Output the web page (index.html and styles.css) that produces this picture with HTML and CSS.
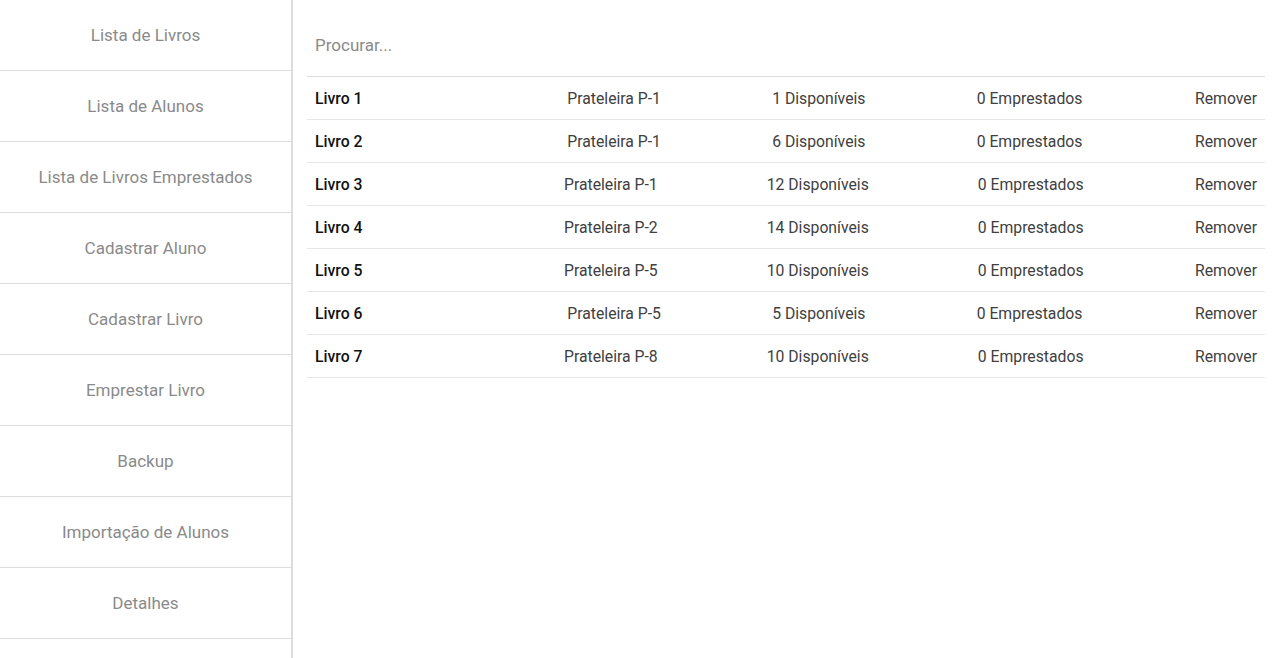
FILE: index.html
```html
<!DOCTYPE html>
<html lang="pt">
<head>
<meta charset="utf-8">
<title>Biblioteca</title>
<link rel="stylesheet" href="styles.css">
</head>
<body>
<div class="app">
  <nav class="sidebar">
    <a class="nav-item">Lista de Livros</a>
    <a class="nav-item">Lista de Alunos</a>
    <a class="nav-item">Lista de Livros Emprestados</a>
    <a class="nav-item">Cadastrar Aluno</a>
    <a class="nav-item">Cadastrar Livro</a>
    <a class="nav-item">Emprestar Livro</a>
    <a class="nav-item">Backup</a>
    <a class="nav-item">Importação de Alunos</a>
    <a class="nav-item">Detalhes</a>
  </nav>
  <main class="content">
    <input class="search" type="text" placeholder="Procurar...">
    <ul class="books">
      <li class="row"><span class="cell name">Livro 1</span><span class="cell">Prateleira P-1</span><span class="cell">1 Disponíveis</span><span class="cell">0 Emprestados</span><span class="cell action">Remover</span></li>
      <li class="row"><span class="cell name">Livro 2</span><span class="cell">Prateleira P-1</span><span class="cell">6 Disponíveis</span><span class="cell">0 Emprestados</span><span class="cell action">Remover</span></li>
      <li class="row"><span class="cell name">Livro 3</span><span class="cell">Prateleira P-1</span><span class="cell">12 Disponíveis</span><span class="cell">0 Emprestados</span><span class="cell action">Remover</span></li>
      <li class="row"><span class="cell name">Livro 4</span><span class="cell">Prateleira P-2</span><span class="cell">14 Disponíveis</span><span class="cell">0 Emprestados</span><span class="cell action">Remover</span></li>
      <li class="row"><span class="cell name">Livro 5</span><span class="cell">Prateleira P-5</span><span class="cell">10 Disponíveis</span><span class="cell">0 Emprestados</span><span class="cell action">Remover</span></li>
      <li class="row"><span class="cell name">Livro 6</span><span class="cell">Prateleira P-5</span><span class="cell">5 Disponíveis</span><span class="cell">0 Emprestados</span><span class="cell action">Remover</span></li>
      <li class="row"><span class="cell name">Livro 7</span><span class="cell">Prateleira P-8</span><span class="cell">10 Disponíveis</span><span class="cell">0 Emprestados</span><span class="cell action">Remover</span></li>
    </ul>
  </main>
</div>
</body>
</html>
```
FILE: styles.css
```css
* { box-sizing: border-box; }
html, body { margin: 0; padding: 0; height: 100%; }
body {
  font-family: Roboto, "Liberation Sans", sans-serif;
  background: #fff;
  color: #212121;
}
.app {
  display: flex;
  height: 100%;
}
.sidebar {
  width: 293px;
  flex: none;
  border-right: 2px solid #dcdcdc;
  display: flex;
  flex-direction: column;
}
.nav-item {
  display: flex;
  align-items: center;
  justify-content: center;
  height: 71px;
  border-bottom: 1px solid #dcdcdc;
  color: #8a8a8a;
  font-size: 17px;
  text-decoration: none;
  flex: none;
}
.content {
  flex: 1;
  padding: 20px 15px 0 14px;
}
.search {
  display: block;
  width: 100%;
  border: none;
  outline: none;
  font-family: inherit;
  font-size: 17px;
  padding: 0 8px 6px 8px;
  height: 56px;
  background: transparent;
  color: #212121;
}
.search::placeholder { color: #8a8a8a; }
.books {
  list-style: none;
  margin: 0;
  padding: 0;
  border-top: 1px solid #dcdcdc;
  font-size: 15.75px;
}
.row {
  display: flex;
  align-items: center;
  height: 43px;
  padding: 0 8px;
  border-bottom: 1px solid #e6e6e6;
}
.cell {
  flex: 1 1 auto;
  padding: 0 16px;
  text-align: center;
  color: #404040;
  white-space: nowrap;
}
.cell.name {
  padding: 0 70px 0 0;
  text-align: left;
  color: #111;
  font-weight: 500;
}
.cell.action {
  flex: none;
  width: 119px;
  padding: 0;
  text-align: right;
}
```
